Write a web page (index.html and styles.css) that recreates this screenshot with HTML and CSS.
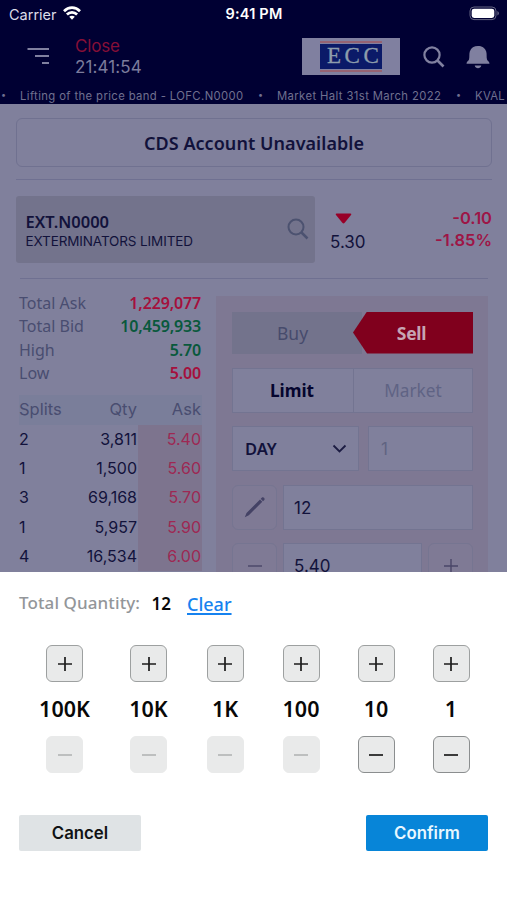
FILE: index.html
```
<!DOCTYPE html>
<html lang="en">
<head>
<meta charset="utf-8">
<meta name="viewport" content="width=device-width, initial-scale=1">
<title>Order entry</title>
<link rel="stylesheet" href="styles.css">
</head>
<body>
<div class="app">
  <div class="status">
    <div class="carrier"><span>Carrier</span>
      <svg class="wifi" width="18" height="14" viewBox="0 0 18 14" fill="none" stroke="#fff" stroke-width="2.700"><path d="M1 5.200C5.600.5 12.400.5 17 5.200M3.900 8.500C6.800 5.600 11.200 5.600 14.100 8.500"/><path d="M6.200 10.800C7.800 9.400 10.200 9.400 11.800 10.800L9 13.700Z" fill="#fff" stroke="none"/></svg>
    </div>
    <div class="clock">9:41 PM</div>
    <svg class="battery" width="31" height="15" viewBox="0 0 31 15"><rect x="1" y="1" width="26" height="12.600" rx="4" fill="none" stroke="#656583"/><rect x="2.700" y="2.700" width="22.600" height="9.200" rx="2.400" fill="#fff"/><path d="M28.400 5C30.500 6 30.500 8.600 28.400 9.600Z" fill="#656583"/></svg>
  </div>
  <header class="header">
    <svg class="menu" width="23" height="18" viewBox="0 0 23 18" fill="none" stroke="#8080a0" stroke-width="2"><path d="M.5 2H22M8 9H22M15 16H22"/></svg>
    <div class="session"><div class="closed">Close</div><div class="time">21:41:54</div></div>
    <div class="logo"><div class="logo-mark">ECC</div></div>
    <svg class="find" width="22" height="22" viewBox="0 0 22 22" fill="none" stroke="#8080a0" stroke-width="2.200"><circle cx="9" cy="9" r="7.600"/><path d="M14.500 14.500L20.500 20.500" stroke-width="2.700"/></svg>
    <svg class="bell" width="24" height="24" viewBox="0 0 24 24" fill="#8080a0"><path d="M12 1C15.800 1 19 2.800 20.200 6.500C21 9 20.300 12 21 14.500C21.400 16 23.500 16.500 23.500 18.800H.5C.5 16.500 2.600 16 3 14.500C3.700 12 3 9 3.800 6.500C5 2.800 8.200 1 12 1ZM8.700 20.500H15.300C14.600 24.200 9.400 24.200 8.700 20.500Z"/></svg>
  </header>
  <div class="ticker"><span class="dot">•</span><span class="t1">Lifting of the price band - LOFC.N0000</span><span class="dot">•</span><span class="t2">Market Halt 31st March 2022</span><span class="dot">•</span><span class="t3">KVAL</span></div>
  <main class="main">
    <div class="banner"><span>CDS Account Unavailable</span></div>
    <div class="rule"></div>
    <section class="stock">
      <div class="picker">
        <div><div class="symbol">EXT.N0000</div><div class="company">EXTERMINATORS LIMITED</div></div>
        <svg width="22" height="22" viewBox="0 0 22 22" fill="none" stroke="#4c5270" stroke-width="2"><circle cx="9" cy="9" r="7.500"/><path d="M14.500 14.500L20.500 20.500" stroke-width="2.500"/></svg>
      </div>
      <div class="price"><svg width="17" height="11" viewBox="0 0 17 11"><path d="M1.500.5H15.500Q17 .5 16 2L9.700 9.800Q8.500 11 7.300 9.800L1 2Q0 .5 1.500.5Z" fill="#970028"/></svg><span>5.30</span></div>
      <div class="change"><div>-0.10</div><div>-1.85%</div></div>
    </section>
    <div class="rule short"></div>
    <section class="trade">
      <div class="book">
        <div class="stat"><span>Total Ask</span><b class="red">1,229,077</b></div>
        <div class="stat"><span>Total Bid</span><b class="green">10,459,933</b></div>
        <div class="stat"><span>High</span><b class="green">5.70</b></div>
        <div class="stat"><span>Low</span><b class="red">5.00</b></div>
        <div class="row head"><span>Splits</span><span>Qty</span><span>Ask</span></div>
        <div class="row"><span>2</span><span>3,811</span><span>5.40</span></div>
        <div class="row"><span>1</span><span>1,500</span><span>5.60</span></div>
        <div class="row"><span>3</span><span>69,168</span><span>5.70</span></div>
        <div class="row"><span>1</span><span>5,957</span><span>5.90</span></div>
        <div class="row"><span>4</span><span>16,534</span><span>6.00</span></div>
      </div>
      <div class="panel">
        <div class="side"><div class="buy">Buy</div><div class="sell">Sell</div></div>
        <div class="kind"><div class="limit">Limit</div><div class="market">Market</div></div>
        <div class="line day-line">
          <div class="field day"><span>DAY</span><svg width="15" height="10" viewBox="0 0 15 10" fill="none" stroke="#1c1c43" stroke-width="1.800"><path d="M1.500 1.500L7.500 7.500L13.500 1.500"/></svg></div>
          <div class="field one">1</div>
        </div>
        <div class="line">
          <div class="square"><svg width="22" height="22" viewBox="0 0 22 22" fill="#444265"><path d="M.8 21.200L2.500 17L16 3.500L18.300 5.800L4.800 19.300ZM16.700 2.800L18 1.500C19.300.3 21.500 2.600 20.300 3.900L19 5.200Z"/></svg></div>
          <div class="field">12</div>
        </div>
        <div class="line last">
          <div class="square"><svg width="16" height="16" viewBox="0 0 16 16" stroke="#4a4668" stroke-width="1.400"><path d="M1 8H15"/></svg></div>
          <div class="field">5.40</div>
          <div class="square"><svg width="16" height="16" viewBox="0 0 16 16" stroke="#4a4668" stroke-width="1.400"><path d="M1 8H15M8 1V15"/></svg></div>
        </div>
      </div>
    </section>
  </main>
  <section class="sheet">
    <div class="total"><span class="label">Total Quantity:</span><span class="sum">12</span><a class="clear">Clear</a></div>
    <div class="steps">
      <div class="step"><button class="key"><svg width="16" height="16" viewBox="0 0 16 16"><path d="M1 8H15M8 1V15"/></svg></button><span>100K</span><button class="key off"><svg width="16" height="16" viewBox="0 0 16 16"><path d="M1 8H15"/></svg></button></div>
      <div class="step"><button class="key"><svg width="16" height="16" viewBox="0 0 16 16"><path d="M1 8H15M8 1V15"/></svg></button><span>10K</span><button class="key off"><svg width="16" height="16" viewBox="0 0 16 16"><path d="M1 8H15"/></svg></button></div>
      <div class="step"><button class="key"><svg width="16" height="16" viewBox="0 0 16 16"><path d="M1 8H15M8 1V15"/></svg></button><span>1K</span><button class="key off"><svg width="16" height="16" viewBox="0 0 16 16"><path d="M1 8H15"/></svg></button></div>
      <div class="step"><button class="key"><svg width="16" height="16" viewBox="0 0 16 16"><path d="M1 8H15M8 1V15"/></svg></button><span>100</span><button class="key off"><svg width="16" height="16" viewBox="0 0 16 16"><path d="M1 8H15"/></svg></button></div>
      <div class="step"><button class="key"><svg width="16" height="16" viewBox="0 0 16 16"><path d="M1 8H15M8 1V15"/></svg></button><span>10</span><button class="key on"><svg width="16" height="16" viewBox="0 0 16 16"><path d="M1 8H15"/></svg></button></div>
      <div class="step"><button class="key"><svg width="16" height="16" viewBox="0 0 16 16"><path d="M1 8H15M8 1V15"/></svg></button><span>1</span><button class="key on"><svg width="16" height="16" viewBox="0 0 16 16"><path d="M1 8H15"/></svg></button></div>
    </div>
    <div class="actions"><button class="cancel">Cancel</button><button class="confirm">Confirm</button></div>
  </section>
</div>
</body>
</html>
```
FILE: styles.css
```
* { box-sizing: border-box; }
body { margin: 0; background: #fff; font-family: Inter, "Liberation Sans", sans-serif; }
svg { display: block; flex: none; }
button { border: 0; padding: 0; font-family: inherit; }
.app { width: 507px; height: 900px; overflow: hidden; display: flex; flex-direction: column; background: #80809c; }

.status { height: 28px; flex: none; background: #000033; color: #fff; display: grid; grid-template-columns: 1fr auto 1fr; align-items: center; padding: 0 6px 0 9px; }
.carrier { display: flex; align-items: center; gap: 6px; font-size: 14.500px; color: #dcdce8; }
.wifi { margin-top: -3px; }
.clock { font-size: 14.500px; font-weight: 600; letter-spacing: .2px; margin-left: -2px; margin-top: -1px; }
.battery { justify-self: end; margin: -2px 1px 0 0; }

.header { height: 60px; flex: none; background: #000033; display: flex; align-items: center; padding-left: 27px; }
.menu { margin-top: -4px; }
.session { margin-left: 25px; width: 227px; font-size: 17px; line-height: 21px; color: #7c7c9c; margin-top: -3px; letter-spacing: .1px; }
.closed { color: #860f37; }
.closed { letter-spacing: -.2px; }
.logo { width: 98px; height: 37px; background: #8080a0; flex: none; display: flex; align-items: center; padding-left: 18px; margin-top: -3px; }
.logo-mark { width: 62px; height: 31px; background: #0b1a68; border-top: 2px solid #956373; border-bottom: 2px solid #956373; box-shadow: inset 0 1px #8080a0, inset 0 -1px #8080a0; font: 23px/26px "Liberation Serif", serif; color: #8d9dac; letter-spacing: 3.500px; padding-left: 7px; -webkit-text-stroke: .3px #8d9dac; }
.find { margin: -2px 0 0 23px; }
.bell { margin: -3px 0 0 21px; }
.ticker { height: 15.500px; flex: none; background: #000033; color: #70708f; font-size: 11.300px; line-height: 16px; white-space: nowrap; display: flex; overflow: hidden; padding-left: 1px; }
.dot { width: 5px; font-size: 9px; line-height: 13px; }
.t1 { margin-left: 14px; width: 238px; letter-spacing: .38px; }
.t2 { margin-left: 14px; width: 179px; letter-spacing: .38px; }
.t3 { margin-left: 14px; letter-spacing: .3px; }

.main { height: 468.500px; flex: none; overflow: hidden; padding: 14.500px 15px 0 16px; color: #12123b; }
.banner { height: 49px; border: 1px solid #707190; border-radius: 6px; font: 600 18px/48px "Noto Sans", sans-serif; text-align: center; letter-spacing: .05px; }
.rule { height: 1px; margin-top: 12px; background: #6f7091; }
.stock { display: flex; height: 67px; margin-top: 16px; }
.picker { width: 299px; background: #73738c; border-radius: 3px; display: flex; justify-content: space-between; align-items: center; padding: 2px 6px 0 9.500px; }
.picker svg { margin-top: -4px; }
.symbol { font: 600 16.500px/21px "Noto Sans", sans-serif; }
.company { font-size: 13.500px; line-height: 18px; letter-spacing: -.12px; }
.price { width: 70px; margin-left: 15px; display: flex; flex-direction: column; font-size: 17px; line-height: 24px; }
.price svg { margin: 17px 0 6px 5px; }
.change { flex: 1; text-align: right; color: #9e1546; font-weight: 600; font-size: 16.500px; line-height: 21.500px; padding-top: 12px; }
.short { margin: 15px 4px 0; }
.trade { display: flex; margin-top: 16.500px; height: 290px; }
.book { width: 183px; margin: -3.500px 14px 0 3px; }
.stat { display: flex; justify-content: space-between; height: 23.300px; font: 16px/23px "Noto Sans", sans-serif; color: #494d70; padding-right: 1px; }
.stat b { font-weight: 600; letter-spacing: -.15px; }
.red { color: #a5103d; }
.green { color: #09593c; }
.row { display: grid; grid-template-columns: 50px 69px 64px; height: 29.300px; line-height: 29px; font-size: 16px; }
.row span:nth-child(2) { text-align: right; padding-right: 1px; }
.row span:nth-child(3) { text-align: right; padding-right: 1px; background: #7d748e; color: #9e2853; }
.row.head { background: #7a7e9a; color: #494d70; margin-top: 10px; height: 29.500px; line-height: 28px; font-size: 16.500px; }
.row.head span:nth-child(3) { background: none; color: inherit; }
.panel { width: 272px; padding: 16px 15px 0 16px; background: #7e7893; }
.side { height: 42px; display: flex; font: 17.500px/42px "Noto Sans", sans-serif; text-align: center; background: linear-gradient(90deg, #73738c 130px, transparent 130px); }
.buy { width: 121px; color: #474b6c; }
.sell { width: 120px; background: #80001d; color: #c6a5b3; font-weight: 700; letter-spacing: -.3px; padding-right: 3px; clip-path: polygon(0 50%, 14px 0, 100% 0, 100% 100%, 14px 100%); }
.kind { display: flex; height: 45px; margin-top: 14px; border: 1px solid #737491; background: #80809c; text-align: center; font: 17.200px/43px "Noto Sans", sans-serif; }
.limit { width: 121px; border-right: 1px solid #737491; font-weight: 700; color: #05052f; padding-right: 2px; }
.market { flex: 1; color: #5f6384; }
.line { display: flex; gap: 6px; height: 45px; margin-top: 13.500px; }
.day-line { gap: 9px; }
.field { flex: 1; border: 1px solid #737491; background: #80809c; padding-left: 10px; font-size: 17px; line-height: 44px; }
.day { flex: none; width: 127px; display: flex; align-items: center; justify-content: space-between; padding: 0 11px 0 12px; font-family: "Noto Sans", sans-serif; font-weight: 600; font-size: 16.500px; }
.one { color: #606482; padding-left: 12px; }
.square { width: 45px; border: 1px solid #767591; border-radius: 6px; display: flex; align-items: center; justify-content: center; flex: none; background: #7f7a95; }

.sheet { flex: 1; background: #fff; padding: 15px 19px 0; }
.total { display: flex; align-items: center; height: 32px; font: 600 17px/32px "Noto Sans", sans-serif; }
.label { width: 132.500px; color: #939699; white-space: nowrap; font-weight: 500; letter-spacing: .1px; }
.sum { width: 35.500px; color: #0a0a0a; padding-top: 2px; }
.clear { color: #1682ef; text-decoration: underline; text-decoration-thickness: 1.500px; text-underline-offset: 2px; font-weight: 500; font-size: 18px; padding-top: 1px; }
.steps { display: grid; grid-template-columns: 91px 77px 76px 76px 74px 76px; margin-top: 26px; }
.step { display: flex; flex-direction: column; align-items: center; }
.step span { font: 600 21.500px/54px "Noto Sans", sans-serif; height: 54px; color: #080808; }
.key { width: 37px; height: 37px; border-radius: 6px; border: 1px solid #9da0a0; background: #e9eaea; display: grid; place-items: center; color: #1c1c1c; }
.key svg { stroke: currentColor; stroke-width: 1.700; }
.off { border-color: #e9eaea; color: #b5b7b7; }
.on { border-color: #8b8e8f; }
.actions { display: flex; justify-content: space-between; margin-top: 42px; }
.actions button { width: 122px; height: 36px; border-radius: 2px; font: 600 16.800px/37px Inter, sans-serif; }
.cancel { background: #dfe3e5; color: #101214; }
.confirm { background: #0785d8; color: #e8f7ff; }
```
